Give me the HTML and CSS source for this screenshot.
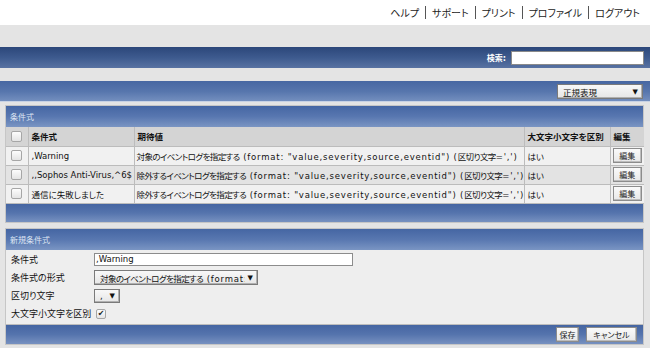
FILE: index.html
```html
<!DOCTYPE html>
<html lang="ja">
<head>
<meta charset="utf-8">
<link rel="stylesheet" href="styles.css">
</head>
<body>
<div class="top">
  <nav class="links">
    <span>ヘルプ</span><i class="sep"></i><span>サポート</span><i class="sep"></i><span>プリント</span><i class="sep"></i><span>プロファイル</span><i class="sep"></i><span>ログアウト</span>
  </nav>
</div>
<div class="band"></div>
<div class="searchbar">
  <label class="search-label">検索:</label>
  <span class="search-input"></span>
</div>
<div class="band2"></div>
<div class="toolbar">
  <span class="sel sel-top"><span class="sel-text">正規表現</span><span class="arrow">▼</span></span>
</div>
<main class="content">
  <section class="panel">
    <div class="panel-head">条件式</div>
    <table class="grid">
      <colgroup>
        <col class="c-chk"><col class="c-expr"><col class="c-val"><col class="c-case"><col class="c-edit">
      </colgroup>
      <thead>
        <tr><th class="chk"><span class="cb"></span></th><th>条件式</th><th>期待値</th><th>大文字小文字を区別</th><th>編集</th></tr>
      </thead>
      <tbody>
        <tr class="odd"><td class="chk"><span class="cb"></span></td><td>,Warning</td><td class="desc"><span class="jp">対象のイベントログを指定する</span> (format: "value,severity,source,eventid") (<span class="jp">区切り文字</span>=',')</td><td>はい</td><td class="edit"><span class="btn">編集</span></td></tr>
        <tr class="even"><td class="chk"><span class="cb"></span></td><td>,,Sophos Anti-Virus,^6$</td><td class="desc"><span class="jp">除外するイベントログを指定する</span> (format: "value,severity,source,eventid") (<span class="jp">区切り文字</span>=',')</td><td>はい</td><td class="edit"><span class="btn">編集</span></td></tr>
        <tr class="odd"><td class="chk"><span class="cb"></span></td><td>通信に失敗しました</td><td class="desc"><span class="jp">除外するイベントログを指定する</span> (format: "value,severity,source,eventid") (<span class="jp">区切り文字</span>=',')</td><td>はい</td><td class="edit"><span class="btn">編集</span></td></tr>
      </tbody>
    </table>
    <div class="panel-foot"></div>
  </section>
  <section class="panel">
    <div class="panel-head">新規条件式</div>
    <div class="form">
      <div class="row"><span class="lbl">条件式</span><span class="text-input">,Warning</span></div>
      <div class="row"><span class="lbl">条件式の形式</span><span class="sel sel-fmt"><span class="sel-text desc"><span class="jp">対象のイベントログを指定する</span> (format: "value</span><span class="arrow">▼</span></span></div>
      <div class="row"><span class="lbl">区切り文字</span><span class="sel sel-sep"><span class="sel-text">,</span><span class="arrow">▼</span></span></div>
      <div class="row"><span class="lbl">大文字小文字を区別</span><span class="cb cb-on">✔</span></div>
    </div>
    <div class="panel-foot foot-btns"><span class="btn">保存</span><span class="btn">キャンセル</span></div>
  </section>
</main>
</body>
</html>
```
FILE: styles.css
```css
* { box-sizing: border-box; }
html, body { margin: 0; padding: 0; }
body {
  width: 650px;
  height: 348px;
  overflow: hidden;
  background: #e4e4e4;
  font-family: "DejaVu Sans", "Noto Sans CJK JP", sans-serif;
  font-size: 8.5px;
  color: #111;
  font-feature-settings: "palt";
}
.top {
  height: 25px;
  background: #fff;
  display: flex;
  justify-content: flex-end;
  align-items: center;
  padding-right: 10px;
}
.links {
  display: flex;
  align-items: center;
  font-size: 10px;
  color: #222;
}
.sep {
  display: inline-block;
  width: 1px;
  height: 13px;
  background: #555;
  margin: 0 6px;
}
.band { height: 22px; background: #e4e4e4; }
.searchbar {
  height: 21px;
  background: linear-gradient(#2c477a, #3d5a8e 50%, #5872a2);
  display: flex;
  justify-content: flex-end;
  align-items: center;
  padding-right: 6px;
}
.search-label {
  color: #fff;
  font-weight: bold;
  font-size: 8px;
  margin-right: 5px;
}
.search-input {
  width: 133px;
  height: 14px;
  background: #fff;
  border: 1px solid #8a8a8a;
}
.band2 { height: 13px; background: #e4e4e4; }
.toolbar {
  height: 21px;
  background: linear-gradient(#4767a2, #5776ad 50%, #7691c0);
  box-shadow: inset 0 -1px 0 #c8d2e4;
  display: flex;
  justify-content: flex-end;
  align-items: center;
  padding-right: 7px;
}
.sel {
  display: inline-flex;
  align-items: center;
  justify-content: space-between;
  height: 15px;
  border: 1px solid #7a7a7a;
  background: linear-gradient(#f8f8f8, #e6e6e6);
  padding: 0 4px 0 5px;
  font-size: 8.5px;
  color: #111;
  box-shadow: inset -1px -1px 0 #b0b0b0;
}
.sel-text { overflow: hidden; white-space: nowrap; flex: 1; min-width: 0; }
.arrow { flex: none; font-size: 7px; margin-left: 3px; color: #111; letter-spacing: 0; }
.sel-top { width: 86px; }
.content {
  padding: 3px 6px 0 5px;
  display: flex;
  flex-direction: column;
  gap: 5px;
}
.panel {
  border: 1px solid #c6c6c6;
  background: #eeeeee;
}
.panel-head {
  height: 21px;
  background: linear-gradient(#4566a3, #5877b0 50%, #7a95c3);
  color: #dfe7f4;
  font-size: 8px;
  display: flex;
  align-items: center;
  padding-left: 4px;
}
.grid {
  width: 100%;
  border-collapse: collapse;
  table-layout: fixed;
}
.c-chk { width: 22px; }
.c-expr { width: 106px; }
.c-val { width: 390px; }
.c-case { width: 86px; }
.c-edit { width: 34px; }
.grid th, .grid td {
  border: 1px solid #bcbcbc;
  height: 19px;
  padding: 0 3px;
  text-align: left;
  white-space: nowrap;
  overflow: hidden;
}
.grid tr > :first-child { border-left: 0; }
.grid tr > :last-child { border-right: 0; }
.grid thead tr > * { border-top: 0; }
.grid th {
  background: #d4d4d4;
  font-weight: bold;
  height: 19px;
}
.grid .odd td { background: #f1f1f1; }
.grid .even td { background: #e3e3e3; }
.grid .chk { text-align: center; padding: 0; }
.desc { letter-spacing: 0.8px; }
.desc .jp { letter-spacing: -0.6px; }
.grid td.desc { padding-left: 2px; }
.cb {
  display: inline-block;
  width: 11px;
  height: 11px;
  border: 1px solid #a6a6a6;
  border-radius: 2px;
  background: linear-gradient(#fdfdfd, #e4e4e4);
  vertical-align: middle;
}
.grid td.edit { padding: 0 2px; text-align: center; }
.btn {
  display: inline-flex;
  align-items: center;
  justify-content: center;
  height: 15px;
  padding: 0 5px;
  border: 1px solid #8c8c8c;
  background: linear-gradient(#fafafa, #e8e8e8);
  box-shadow: inset -1px -1px 0 #bdbdbd;
  font-size: 8px;
  color: #222;
}
.grid .btn { width: 29px; padding: 0; }
.panel-foot {
  height: 18px;
  background: linear-gradient(#4565a2, #5574ad 50%, #7791c0);
}
.form {
  padding: 1px 0 1px 5px;
  border-bottom: 1px solid #bdbdbd;
}
.row {
  display: flex;
  align-items: center;
  height: 18px;
}
.lbl {
  width: 83px;
  font-size: 9px;
  color: #111;
  white-space: nowrap;
}
.text-input {
  width: 259px;
  height: 13px;
  border: 1px solid #8c8c8c;
  background: #fff;
  font-size: 8.5px;
  padding-left: 1px;
  line-height: 11px;
}
.sel-fmt { width: 164px; height: 15px; }
.sel-sep { width: 26px; height: 14px; }
.cb-on {
  margin-left: 2px;
  width: 10px;
  height: 10px;
  font-size: 8px;
  line-height: 8px;
  text-align: center;
  color: #222;
}
.foot-btns {
  height: 19px;
  display: flex;
  justify-content: flex-end;
  align-items: center;
  gap: 7px;
  padding-right: 6px;
}
.foot-btns .btn { height: 15px; padding: 0 4px; }
.foot-btns .btn:last-child { width: 51px; }
.foot-btns .btn:first-child { width: 23px; padding: 0; }
```
